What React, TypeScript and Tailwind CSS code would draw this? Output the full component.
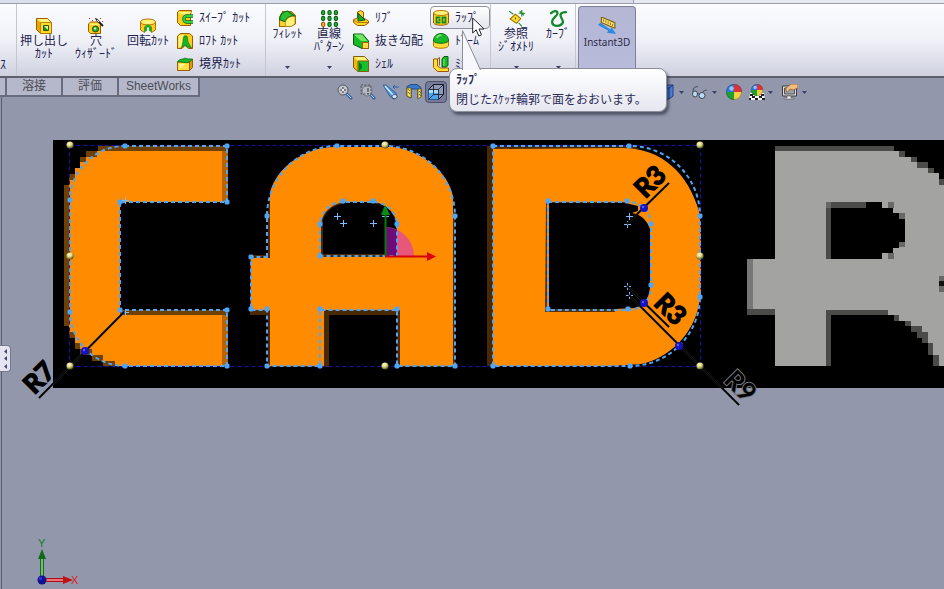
import type { ReactNode } from "react"

const jp = "font-['Liberation_Sans','Noto_Sans_CJK_JP',sans-serif]"

/* ---------- ribbon icons, all on a 16 x 16 grid ---------- */

function Icon({ children, className = "h-4 w-4" }: { children: ReactNode; className?: string }) {
  return (
    <svg viewBox="0 0 16 16" className={`shrink-0 ${className}`} aria-hidden="true">
      {children}
    </svg>
  )
}

const ExtrudeCutIcon = () => (
  <Icon>
    <path d="M.5 .5h11l4 4v11h-11l-4-4z" fill="#e8a800" stroke="#a05a00" />
    <path d="M1 1h10.500l3.500 3.500H4.500z" fill="#fff27a" />
    <path d="M4.500 4.500h11v11h-11z" fill="#ffdc28" stroke="#a86400" strokeWidth=".7" />
    <path d="M7.500 7.500h5v5h-5z" fill="#d8f8b0" stroke="#3a4a00" />
    <path d="M8 12V8l4 4z" fill="#109a20" />
  </Icon>
)

const HoleWizardIcon = () => (
  <Icon>
    <path d="M.5 6l2-2h8l2 2v9.500h-10l-2-2z" fill="#ffcc1c" stroke="#a05a00" />
    <path d="M1 5.500h9l2 1.500H3z" fill="#fff27a" />
    <circle cx="7.500" cy="11" r="3" fill="#22b030" stroke="#224a00" />
    <circle cx="7" cy="10.500" r="1.200" fill="#b8f4a0" />
    <path d="M8 1l7 7" stroke="#222" strokeWidth="1.800" />
    <path d="M9 2l2 2" stroke="#fff" />
    <path d="M1 0h1v1H1zM4 2h1v1H4zM12 0h1v1h-1zM14 3h1v1h-1zM7 0h1v1H7z" fill="#e02010" />
  </Icon>
)

const RevolveCutIcon = () => (
  <Icon>
    <path d="M.5 4v8l4 2.500V9l3.500-3 3.500 3v5.500l4-2.500V4z" fill="#ffcc1c" stroke="#b87400" />
    <ellipse cx="8" cy="4" rx="7.500" ry="3" fill="#fff27a" stroke="#b87400" />
    <path d="M4.500 14.500V9L8 6l3.500 3v5.500l-2.500-2V9.500H7v3z" fill="#18b028" />
  </Icon>
)

const SweepCutIcon = () => (
  <Icon>
    <path d="M.5 2l2-1.500h12l-1 4v11h-10l-3-3z" fill="#ffcc1c" stroke="#a05a00" />
    <path d="M1 2h13l-1.500 2.500H4z" fill="#fff27a" />
    <path d="M16 6h-6a3 3 0 0 0 0 6h6" fill="none" stroke="#0a6a14" strokeWidth="3.600" />
    <path d="M16 6h-6a3 3 0 0 0 0 6h6" fill="none" stroke="#30d040" strokeWidth="2" />
  </Icon>
)

const LoftCutIcon = () => (
  <Icon>
    <path d="M.5 3l3-2.500h9l3 2.500v12.500h-4l-3.500-3-3 3h-4.500z" fill="#ffcc1c" stroke="#a05a00" />
    <path d="M1.500 3.500L5 1.500h3L5 5v8l-3.500 1z" fill="#fff27a" />
    <path d="M7 3h3l1 6 3.500 6-4-1L8 12l-3.500 3 1.500-6z" fill="#10b828" stroke="#0a6a14" strokeWidth=".6" />
  </Icon>
)

const BoundaryCutIcon = () => (
  <Icon>
    <path d="M.5 6h12v8.500H.5z" fill="#ffe040" stroke="#a05a00" />
    <path d="M12.500 6l3-3v8.500l-3 3z" fill="#e09a00" stroke="#a05a00" />
    <path d="M.5 6c2-4 6-2 7-4 2 1 5 1 8 1l-3 3c-4 2-8-1-12 0z" fill="#18b828" stroke="#0a6a14" strokeWidth=".8" />
    <path d="M2 8h6L3 13z" fill="#fff6a0" />
  </Icon>
)

const FilletIcon = () => (
  <Icon className="h-[17px] w-[17px]">
    <path d="M.5 7l3-5.500h8l4 4V13l-4 2.500H.5z" fill="#ffd428" stroke="#9a6a00" />
    <path d="M.5 9C1 4 4 1.500 8 1l6.500 4.500C10 5.500 7 7.500 6 11z" fill="#28c030" stroke="#0a6a14" />
    <path d="M6 11.500c1-4 4-5.500 9-5.500v7l-3.500 2.500H6z" fill="#fff27a" stroke="#a87400" strokeWidth=".6" />
  </Icon>
)

const PatternIcon = () => (
  <Icon className="h-[17px] w-[17px]">
    {[0.5, 6.5, 12.5].map((x) =>
      [0.5, 6, 11.5].map((y) => (
        <rect
          key={`${x}-${y}`}
          x={x}
          y={y}
          width="3"
          height="4"
          rx="1.500"
          fill={x === 0.5 && y === 11.5 ? "#f0b020" : "#20b030"}
          stroke={x === 0.5 && y === 11.5 ? "#a05800" : "#0a5a14"}
        />
      )),
    )}
  </Icon>
)

const RibIcon = () => (
  <Icon>
    <path d="M.5 9.500l4-1.500V2l3-1.500 3 1.500v6l5 3v2l-4 2.500H4.500l-4-3z" fill="#ffd428" stroke="#a05a00" />
    <path d="M5 3l7 7-7 1z" fill="#18a828" stroke="#0a5a14" />
    <path d="M1 10.500L5 12.500h10" fill="none" stroke="#b87400" />
  </Icon>
)

const DraftIcon = () => (
  <Icon>
    <path d="M.5 1h9l6 7v7.500H9l-8.500-4z" fill="#18b828" stroke="#0a5a14" />
    <path d="M1 1.500h8l5.500 6.500H8z" fill="#70e860" />
    <path d="M9.500 9.500h6v6h-6z" fill="#ffdc4a" stroke="#a06000" />
  </Icon>
)

const ShellIcon = () => (
  <Icon>
    <path d="M.5 .5h11l4 4v11H5l-4.500-4z" fill="#f0b810" stroke="#806000" />
    <path d="M1 1h10.500L15 5H5z" fill="#fff27a" />
    <path d="M5 5h10.500v10.500H5z" fill="#18c030" stroke="#806000" />
    <path d="M6 6l3 3v3l-3 3z" fill="#0a7a18" />
  </Icon>
)

const WrapIcon = () => (
  <Icon>
    <path d="M.5 3v10c2 3 13 3 15 0V3z" fill="#ffd020" stroke="#a05a00" />
    <ellipse cx="8" cy="3" rx="7.500" ry="2.500" fill="#fff27a" stroke="#b87400" />
    <path d="M7.500 7.500h-4v5h4M5.500 10h2M9.500 7.500h3v5h-3z" fill="none" stroke="#108a20" strokeWidth="1.800" />
  </Icon>
)

const DomeIcon = () => (
  <Icon>
    <path d="M.5 7v6c2 3 13 3 15 0V7z" fill="#ffdc38" stroke="#b87400" />
    <path d="M.5 8C.5-2 15.500-2 15.500 8c-2 3-13 3-15 0z" fill="#18b828" stroke="#0a6a14" />
    <path d="M3.500 5c1-2 3-3 5-3" stroke="#80f070" fill="none" strokeWidth="1.500" />
  </Icon>
)

const MirrorIcon = () => (
  <Icon>
    <path d="M.5 3h4v7l3 2h8v3.500h-11l-4-4z" fill="#ffdc38" stroke="#a05a00" />
    <path d="M9 3l2-2.500h4v9l-2 1.500H9z" fill="#18b828" stroke="#0a5a14" />
    <path d="M11 3v7" stroke="#80f070" />
    <path d="M4.500 3l2-1.500v8" stroke="#a05a00" fill="none" />
  </Icon>
)

const ReferenceIcon = () => (
  <Icon className="h-[17px] w-[17px]">
    <path d="M7 4l5 4-4 4.500-6-4z" fill="#ffe030" stroke="#a07400" />
    <path d="M7 7v2" stroke="#704000" />
    <path d="M1 1l4 3M10 12l3 3.500M13 0v6M10 3h6M11 1l4 4" stroke="#108a20" fill="none" />
  </Icon>
)

const CurveIcon = () => (
  <Icon className="h-[17px] w-[17px]">
    <path
      d="M1 3c2-2 6-3 6 0 0 3-5 4-5 8 0 5 8 5 10 1 1-3-3-5-2-8 1-2 3-2 5-2"
      fill="none"
      stroke="#12882a"
      strokeWidth="2.200"
      strokeLinecap="round"
    />
  </Icon>
)

const Instant3DIcon = () => (
  <Icon className="h-[18px] w-[18px]">
    <path d="M3 0l12 5v5L3 5z" fill="#ffe070" stroke="#7a6410" />
    <path d="M5 2v2M7 3v2M9 4v2M11 5v2M13 6v2" stroke="#6a5000" strokeWidth=".7" />
    <path d="M0 7l9 5-1 2 8 1-4-6-1 2-9-6z" fill="#2a8ae0" />
  </Icon>
)

/* ---------- ribbon parts ---------- */

const Caret = ({ className = "" }: { className?: string }) => (
  <svg viewBox="0 0 5 3" className={`h-[3px] w-[5px] ${className}`} aria-hidden="true">
    <path d="M0 0h5L2.500 3z" fill="#3c3f66" />
  </svg>
)

interface BigProps {
  icon: ReactNode
  lines: string[]
  className: string
  caret?: boolean
}

function BigButton({ icon, lines, className, caret }: BigProps) {
  return (
    <button type="button" className={`flex flex-col items-center whitespace-nowrap ${className}`}>
      {icon}
      {lines.map((line) => (
        <span key={line} className="h-[13px] leading-[14px]">{line}</span>
      ))}
      {caret && <Caret className="mt-auto mb-[7px]" />}
    </button>
  )
}

function SmallButton({ icon, label, className = "" }: { icon: ReactNode; label: string; className?: string }) {
  return (
    <button type="button" className={`flex h-[23px] items-center gap-1.5 whitespace-pre ${className}`}>
      {icon}
      <span>{label}</span>
    </button>
  )
}

function Ribbon() {
  return (
    <header className={`flex h-[74px] overflow-hidden border-b-2 border-[#5d606c] bg-linear-to-b from-[#fbfcff] via-[#f0f1f7] to-[#cfd1e0] text-[12px] leading-[14px] text-[#22224e] ${jp}`}>
      <div className="flex w-[17px] items-end border-r border-[#c3c5d2] pb-1">
        <span>ｽ</span>
      </div>
      <BigButton icon={<ExtrudeCutIcon />} lines={["押し出し", "ｶｯﾄ"]} className="ml-px w-[52px] pt-3.5" />
      <BigButton icon={<HoleWizardIcon />} lines={["穴", "ｳｨｻﾞｰﾄﾞ"]} className="w-[52px] pt-3.5" />
      <BigButton icon={<RevolveCutIcon />} lines={["回転ｶｯﾄ"]} className="w-[52px] pt-3.5" />
      <div className="flex w-[92px] flex-col border-r border-[#c3c5d2] pt-0.5 pl-[3px]">
        <SmallButton icon={<SweepCutIcon />} label="ｽｲｰﾌﾟ ｶｯﾄ" />
        <SmallButton icon={<LoftCutIcon />} label="ﾛﾌﾄ ｶｯﾄ" />
        <SmallButton icon={<BoundaryCutIcon />} label="境界ｶｯﾄ" />
      </div>
      <BigButton icon={<FilletIcon />} lines={["ﾌｨﾚｯﾄ"]} className="w-[43px] pt-1.5" caret />
      <BigButton icon={<PatternIcon />} lines={["直線", "ﾊﾟﾀｰﾝ"]} className="w-[40px] pt-1.5" caret />
      <div className="flex w-[81px] flex-col pt-0.5 pl-[4px]">
        <SmallButton icon={<RibIcon />} label="ﾘﾌﾞ" />
        <SmallButton icon={<DraftIcon />} label="抜き勾配" />
        <SmallButton icon={<ShellIcon />} label="ｼｪﾙ" />
      </div>
      <div className="flex w-[61px] flex-col border-r border-[#c3c5d2] pt-0.5">
        <SmallButton
          icon={<WrapIcon />}
          label="ﾗｯﾌﾟ"
          className="w-[60px] rounded border border-[#8e909c] bg-linear-to-b from-white to-[#e4e5ee] pl-0.5"
        />
        <SmallButton icon={<DomeIcon />} label="ﾄﾞｰﾑ" className="pl-[3px]" />
        <SmallButton icon={<MirrorIcon />} label="ﾐﾗｰ" className="pl-[3px]" />
      </div>
      <BigButton icon={<ReferenceIcon />} lines={["参照", "ｼﾞｵﾒﾄﾘ"]} className="w-[50px] pt-1.5" caret />
      <BigButton icon={<CurveIcon />} lines={["ｶｰﾌﾞ"]} className="w-[35px] border-r border-[#c3c5d2] pt-1.5" caret />
      <button
        type="button"
        aria-pressed="true"
        className="mt-0.5 ml-0.5 flex w-[58px] flex-col items-center rounded-t border border-b-0 border-[#7e809a] bg-linear-to-b from-[#b4b6d4] to-[#b9bbdc] pt-2.5 font-['Noto_Sans','Open_Sans',sans-serif] text-[10px] leading-[14px] text-[#2b2b48]"
      >
        <Instant3DIcon />
        <span>Instant3D</span>
      </button>
    </header>
  )
}

/* ---------- view toolbar ---------- */

const tool = "flex h-[22px] items-center justify-center"

function ViewToolbar() {
  return (
    <nav aria-label="View" className="flex pt-[3px]">
      <button type="button" aria-label="Zoom to fit" className={`w-[23px] ${tool}`}>
        <Icon>
          <path d="M9 9l6 6" stroke="#3a66a8" strokeWidth="3" />
          <path d="M10 10l4 4" stroke="#a8d0f4" />
          <circle cx="6" cy="6" r="5" fill="#c4c8d2" stroke="#54565e" />
          <path d="M3 6h6M6 3v6" stroke="#333" />
          <path d="M5 5h2v2H5z" fill="#eee" />
        </Icon>
      </button>
      <button type="button" aria-label="Zoom to area" className={`w-[23px] ${tool}`}>
        <Icon>
          <path d="M10 10l5 5" stroke="#3a66a8" strokeWidth="3" />
          <path d="M11 11l3 3" stroke="#a8d0f4" />
          <circle cx="7" cy="7" r="5" fill="#b4b8c6" stroke="#74767e" />
          <path d="M1 1h10v9H1z" fill="none" stroke="#555" strokeDasharray="2 1.500" />
          <path d="M8 4v4M8 9v1" stroke="#333" />
        </Icon>
      </button>
      <button type="button" aria-label="Previous view" className={`w-[23px] ${tool}`}>
        <Icon>
          <path d="M0 1l3 0 10 8 1 4-3 2.500-4-3z" fill="#4a90d8" stroke="#2a5a98" strokeWidth=".8" />
          <path d="M2 2l8 9" stroke="#cfe8ff" strokeWidth="1.500" />
          <ellipse cx="11.500" cy="12.500" rx="2.500" ry="2" fill="#d4e8f8" stroke="#335" strokeWidth=".7" />
          <path d="M10 3h6M12 1l-2 2 2 2" stroke="#2464b4" fill="none" />
        </Icon>
      </button>
      <button type="button" aria-label="Section view" className={`w-[23px] ${tool}`}>
        <Icon>
          <path d="M1 2.500l4-2h6l4 3v9l-3 2V5H5v9l-4-2z" fill="#3a7ac8" stroke="#244a84" />
          <path d="M1 4h4v10l-4-2zM12 5h3v8l-3 2z" fill="#ffe050" stroke="#5a4a00" strokeWidth=".7" />
          <path d="M2 5l2 2M2 8l2 2M13 7l2 2M13 10l2 2" stroke="#5a4a00" strokeWidth=".8" />
        </Icon>
      </button>
      <button
        type="button"
        aria-label="View orientation"
        className={`w-[22px] rounded border border-[#4c5068] bg-[#747a98] ${tool}`}
      >
        <Icon>
          <path d="M.5 5.500l5-5h10v10l-5 5H.5z" fill="#9098b8" stroke="#151520" />
          <path d="M.5 5.500h10v10H.5z" fill="#4aa4ee" />
          <path d="M1 6h9v3H1z" fill="#a8dcff" />
          <path d="M5.500 .5v10h10M10.500 15.500v-10h-10M10.500 5.500l5-5M.5 15.500l5-5" stroke="#151520" fill="none" strokeWidth=".8" />
        </Icon>
      </button>
      {/* the run between these two groups sits under the tooltip */}
      <button type="button" aria-label="Display style" className={`ml-[211px] w-[16px] ${tool}`}>
        <Icon>
          <path d="M1 3l4-2h10v11l-4 3H1z" fill="#4a80dc" stroke="#223c88" />
          <path d="M11 4l4-3M11 4v11M1 4h10" stroke="#18307a" fill="none" />
        </Icon>
      </button>
      <Caret className="mt-2.5 ml-[5px]" />
      <button type="button" aria-label="Hide or show items" className={`ml-[7px] w-[17px] ${tool}`}>
        <Icon>
          <path d="M1 8c0-5 3-6 5-5M10 11c0-4 3-5 5-5" stroke="#44464e" fill="none" />
          <ellipse cx="3" cy="10" rx="2.500" ry="3" fill="#b8dcf8" stroke="#44464e" />
          <ellipse cx="10" cy="11.500" rx="3" ry="3" fill="#b8dcf8" stroke="#44464e" />
          <path d="M5.500 9.500l2 1" stroke="#44464e" />
        </Icon>
      </button>
      <Caret className="mt-2.5 ml-1" />
      <button type="button" aria-label="Edit appearance" className={`ml-2 w-[17px] ${tool}`}>
        <Icon>
          <Ball />
        </Icon>
      </button>
      <button type="button" aria-label="Apply scene" className={`ml-1.5 w-[17px] ${tool}`}>
        <Icon>
          <path d="M1 9h14l1 7H0z" fill="#f4f4f4" />
          <path d="M1 10h3v2H1zM6 14h3v2H6zM12 10h3v2h-3zM3 12h3v2H3zM10 12h3v2h-3zM0 14h2v2H0zM13 14h3v2h-3z" fill="#222" />
          <g transform="translate(2 0) scale(.75)">
            <Ball />
          </g>
        </Icon>
      </button>
      <Caret className="mt-2.5 ml-[3px]" />
      <button type="button" aria-label="View settings" className={`ml-2 w-[17px] ${tool}`}>
        <Icon>
          <path d="M.5 2h14v10H.5z" fill="#ddd" stroke="#3c3c40" />
          <path d="M2.500 4h10v6h-10z" fill="#9aa0b0" stroke="#555" />
          <path d="M5 12h4v2h3v1H2v-1h3z" fill="#eee" stroke="#555" strokeWidth=".6" />
          <path d="M4 4l5-4h7v4l-5 2-3-1-2 3-2-1z" fill="#f0bc80" stroke="#8a5420" strokeWidth=".7" />
        </Icon>
      </button>
      <Caret className="mt-2.5 ml-1" />
    </nav>
  )
}

const Ball = () => (
  <>
    <path d="M8 8V0a8 8 0 0 0-8 8z" fill="#2a78e0" />
    <path d="M8 8h8a8 8 0 0 0-8-8z" fill="#e03038" />
    <path d="M8 8v8a8 8 0 0 1-8-8z" fill="#20a030" />
    <path d="M8 8h8a8 8 0 0 1-8 8z" fill="#f4d040" />
    <circle cx="5.500" cy="4.500" r="2.200" fill="#fff" opacity=".55" />
    <circle cx="8" cy="8" r="7.600" fill="none" stroke="#444" strokeWidth=".8" opacity=".6" />
  </>
)

function Tabs() {
  const tab = "h-[19px] border-r-2 border-b-2 border-[#696c7c] bg-[#b5b8ca]"
  return (
    <div role="tablist" className={`flex text-[12px] leading-[17px] text-[#4c4d58] ${jp}`}>
      <div className={`w-[7px] ${tab}`} />
      <button type="button" role="tab" className={`w-[56px] ${tab}`}>溶接</button>
      <button type="button" role="tab" className={`w-[56px] ${tab}`}>評価</button>
      <button type="button" role="tab" className={`w-[81px] ${tab}`}>SheetWorks</button>
    </div>
  )
}

/* ---------- sketch ---------- */

const sketchPoints = [
  [125, 146], [227, 146], [227, 202], [120, 202], [120, 310], [227, 310], [227, 366], [125, 366], [70, 312], [70, 200],
  [337, 146], [267, 216], [455, 216], [320, 224], [343, 201], [373, 201], [397, 224], [320, 256], [251, 257],
  [251, 309], [267, 309], [267, 366], [320, 366], [320, 309], [397, 309], [397, 366], [455, 366],
  [493, 146], [629, 146], [700, 216], [700, 297], [630, 366], [493, 366],
  [548, 201], [627, 201], [651, 224], [651, 285], [628, 309], [548, 309],
]
const centerMarks = [
  [125, 200], [125, 312], [337, 216], [343, 223], [373, 223], [385, 216], [629, 216], [627, 224], [627, 286], [629, 295],
]
const handles = [[70, 145], [70, 256], [70, 366], [385, 145], [385, 366], [700, 145], [700, 256], [700, 366]]
const arcPoints = [[85, 351], [644, 208], [644, 303], [679, 346]]

const contours = [
  "M125 146H227V202H120V310H227V366H125A55 55 0 0 1 70 312V200A55 55 0 0 1 125 146",
  "M267 257V216A70 70 0 0 1 337 146H385A70 70 0 0 1 455 216V366H397V310H320V366H267V310H251V257Z",
  "M320 256V224A23 23 0 0 1 343 202H373A24 24 0 0 1 397 225V256Z",
  "M493 146H630A70 70 0 0 1 700 216V297A70 70 0 0 1 630 366H493Z",
  "M548 202H628A23 23 0 0 1 651 225V286A23 23 0 0 1 628 310H548Z",
]

const radii = [
  { label: "R7", x: 37, y: 398, angle: -45, from: [124, 312], to: [39, 398] },
  { label: "R3", x: 648, y: 202, angle: -45, from: [627, 224], to: [669, 183] },
  { label: "R3", x: 650, y: 307, angle: 45, from: [627, 286], to: [669, 327] },
  { label: "R9", x: 720, y: 384, angle: 45, from: [629, 295], to: [739, 405] },
]

function Sketch() {
  return (
    <svg className="h-[310px] w-full" role="img" aria-label="Sketch">
      <defs>
        <radialGradient id="handle" cx=".4" cy=".3" r=".7">
          <stop offset="0" stopColor="#ffffe0" />
          <stop offset=".5" stopColor="#d8d478" />
          <stop offset="1" stopColor="#4a4820" />
        </radialGradient>
      </defs>
      <g transform="translate(-2 -105)">
        <rect x="53" y="140" width="100%" height="248" />

        {/* first profile */}
        <g shapeRendering="crispEdges">
          <path d="M64 185H69V174H75V168H80V157H86V151H98V146H228V202H120V310H228V366H103V361H92V355H80V349H75V338H69V326H64Z" fill="#704000" />
          <path d="M69 180H75V168H80V162H86V157H97V151H222V202H120V315H222V366H115V361H103V355H92V349H80V343H75V332H69Z" fill="#ff8c00" />
          <path d="M222 151h6v51h-6zM222 315h6v51h-6z" fill="#b86500" />
        </g>

        {/* second profile */}
        <path d="M268 367V315H250V255H268V215L270 195H300V300H450V200L455 215V367H397V315H329V367Z" fill="#4a2800" />
        <path d="M270 366V310H251V258H270V193C276 168 304 147 335 147H394C424 152 449 173 453 197V366H400V310H324V366Z" fill="#ff8c00" />
        <path d="M321 257V224Q323 207 343 202H373Q395 206 397 226V257Z" fill="#4a2800" />
        <path d="M323 254V220C326 209 337 203 353 202H370C387 203 395 213 397 226V254Z" />
        <path d="M324 310h73v5h-68v51h-5z" fill="#4a2800" />

        {/* third profile */}
        <path d="M487 151V146H630L640 149L493 149V366H487Z" fill="#4a2800" />
        <path d="M493 149L620 148C662 147 688 174 699 211L701 230V290L699 304C694 333 670 358 641 364L610 366H493Z" fill="#ff8c00" />
        <path d="M546 202H628V204L547 205V309H615V312H545Z" fill="#5a3000" />
        <path d="M549 203H625L638 206V211L632 213Q645 215 650 229V288Q648 305 635 308L615 309H549Z" />

        {/* fourth letter, not traced yet */}
        <g shapeRendering="crispEdges">
          <path d="M775 146H894V151H905V157H917V162H928V168H934V173H939V179H944V366H933V355H928V343H922V338H917V332H911V326H905V321H894V315H831V366H775V315H747V259H775Z" fill="#4b4b4a" />
          <path d="M747 259h28v50h-28z" fill="#777775" />
          <path d="M775 151H899V157H911V162H917V168H928V173H939V185H944V366H939V355H933V343H928V332H922V326H911V321H899V315H888V310H826V366H775V309H753V259H775Z" fill="#a3a3a1" />
          <path d="M826 310h57v5h-52v51h-5z" fill="#4b4b4a" />
          <path d="M826 202H882V208H893V213H899V225H905V237H899V248H893V253H882V259H826Z" fill="#4b4b4a" />
          <path d="M831 208H866V202H882V208H893V213H899V219H905V242H899V248H893V253H882V259H831Z" />
          <path d="M826 202h5v6h-5zM888 202h6v6h-6zM899 213h6v6h-6zM899 242h6v5h-6zM888 253h6v6h-6zM939 276h5v16h-5z" fill="#686866" />
          <path d="M939 281h5v5h-5z" fill="#111" />
        </g>

        {/* origin */}
        <path d="M385 227A29 29 0 0 1 414 256H385Z" fill="#e8577a" />
        <path d="M385 227A29 29 0 0 1 397 230V256H385Z" fill="#6d0b78" />

        <path d="M69.500 145.500H700M69.500 366.500H700M69.500 145.500V366M700.500 145.500V366" fill="none" stroke="#1212b0" strokeDasharray="4 3" />
        {contours.map((d) => (
          <path key={d} d={d} fill="none" stroke="#51a5f5" strokeWidth="2" strokeDasharray="4 3" />
        ))}
        {sketchPoints.map(([x, y]) => (
          <path key={`${x}-${y}`} d={`M${x - 2} ${y - 2}h4v4h-4zM${x - 3} ${y}h6M${x} ${y - 3}v6`} fill="#51a5f5" stroke="#51a5f5" strokeWidth=".6" />
        ))}
        {centerMarks.map(([x, y]) => (
          <path key={`${x}-${y}`} d={`M${x - 3} ${y + 0.5}h7M${x + 0.5} ${y - 3}v7`} stroke="#7fbcff" />
        ))}

        <path d="M385.500 256V214" stroke="#087808" strokeWidth="2" />
        <path d="M381 215l4-10 5 10z" fill="#0a8a10" />
        <path d="M385 256.500H427" stroke="#d00010" strokeWidth="2" />
        <path d="M427 252l9 4.500-9 4.500z" fill="#e00010" />

        {radii.map((r) => (
          <g key={r.x}>
            <path d={`M${r.from}L${r.to}`} stroke="#3c3c42" strokeWidth="2.200" />
            <path d={`M${r.from}L${r.to}`} stroke="#000" strokeWidth="1.600" />
            <g
              transform={`translate(${r.x} ${r.y}) rotate(${r.angle})`}
              className="font-['Liberation_Sans_Narrow','Lato',sans-serif] text-[26px] font-bold"
            >
              <text
                y="-4"
                stroke={r.label === "R9" ? "#77777f" : "#000"}
                strokeWidth={r.label === "R9" ? 2 : 1.4}
                paintOrder="stroke"
              >
                {r.label}
              </text>
            </g>
          </g>
        ))}
        {handles.map(([x, y]) => (
          <circle key={`${x}-${y}`} cx={x} cy={y} r="3.600" fill="url(#handle)" />
        ))}
        {arcPoints.map(([x, y]) => (
          <g key={x + y}>
            <circle cx={x} cy={y} r="4" fill="#1414c0" />
            <circle cx={x - 1} cy={y - 1} r="1.200" fill="#5c5cf0" />
          </g>
        ))}
      </g>
    </svg>
  )
}

function Triad() {
  return (
    <svg className="mt-auto ml-[30px] h-[64px] w-[60px]" role="img" aria-label="Axes">
      <path d="M10 53V30" stroke="#1a6a20" strokeWidth="4" />
      <path d="M10 53V30" stroke="#6cc070" strokeWidth="2" />
      <path d="M6 34l4-10 4 10z" fill="#106a18" />
      <path d="M13 55h20" stroke="#a81018" strokeWidth="4" />
      <path d="M13 55h20" stroke="#f07078" strokeWidth="2" />
      <path d="M31 51l10 4-10 4z" fill="#c01018" />
      <circle cx="10" cy="55" r="4.500" fill="#101090" />
      <path d="M7 52h3v3H7z" fill="#2c2ce0" />
      <text x="6" y="22" className="font-['Liberation_Sans',sans-serif] text-[11px]" fill="#127a20">Y</text>
      <text x="39" y="59" className="font-['Liberation_Sans',sans-serif] text-[11px]" fill="#e01820">X</text>
    </svg>
  )
}

function Tooltip() {
  return (
    <div
      role="tooltip"
      className={`absolute top-[68px] left-[449px] w-[218px] rounded-lg border border-[#8c8e98] bg-linear-to-b from-white to-[#e6e7f0] px-1.5 pt-1 pb-1 text-[12px] leading-[14px] whitespace-nowrap text-[#2b2b58] shadow-[2px_3px_3px_rgba(40,42,60,0.6)] ${jp}`}
    >
      <svg className="absolute -top-[40px] left-[10px] h-[41px] w-[22px]" aria-hidden="true">
        <path d="M2.500 41V1.500L20.500 41" fill="#f8f8fc" stroke="#8c8e98" />
      </svg>
      <p className="font-bold">ﾗｯﾌﾟ</p>
      <p className="mt-1.5">閉じたｽｹｯﾁ輪郭で面をおおいます。</p>
    </div>
  )
}

export default function App() {
  return (
    <div className="relative flex min-h-screen flex-col overflow-hidden bg-[#9297ab]">
      <div className="flex h-1 border-b border-[#9c9eaa] bg-[#dbdfed]">
        <div className="ml-[633px] flex-1 border-l border-[#9c9eaa] bg-[#e6e9f4]" />
      </div>
      <Ribbon />
      <div className="flex h-[27px] items-stretch">
        <div className="flex w-[333px] flex-col">
          <Tabs />
          <div className="ml-px flex-1 border-l border-[#5a5d70]" />
        </div>
        <ViewToolbar />
      </div>
      <main className="relative ml-px flex flex-1 flex-col border-l border-[#5a5d70]">
        <Sketch />
        <Triad />
        <button
          type="button"
          aria-label="Show panel"
          className="absolute top-[240px] -left-0.5 flex h-[27px] w-[11px] flex-col items-center justify-evenly rounded-r border border-l-0 border-[#77798c] bg-[#e4e5f0]"
        >
          {[0, 1, 2].map((i) => (
            <svg key={i} viewBox="0 0 3 5" className="h-[5px] w-[3px]" aria-hidden="true">
              <path d="M3 0v5L0 2.500z" fill="#44476c" />
            </svg>
          ))}
        </button>
      </main>
      <Tooltip />
      <svg viewBox="0 0 13 20" className="absolute top-[17px] left-[472px] h-5 w-[13px]" aria-hidden="true">
        <path d="M.7 1v15l3.500-3.200L6.800 19l2.700-1.200L7 12h5z" fill="#fff" stroke="#222" />
      </svg>
    </div>
  )
}
